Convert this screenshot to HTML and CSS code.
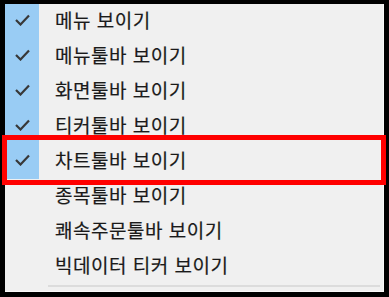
FILE: index.html
```html
<!DOCTYPE html>
<html lang="ko">
<head>
  <meta charset="UTF-8" />
  <meta name="viewport" content="width=device-width, initial-scale=1.0"/>
  <title>보기 메뉴</title>
  <link rel="stylesheet" href="styles.css">
</head>
<body>

  <div class="menu">
    <ul class="items">
      <li class="item checked">
        <span class="mark"><svg width="15" height="12" viewBox="0 0 15 12"><path d="M1 6 L5.5 10.5 L14 1.5" fill="none" stroke="#383838" stroke-width="2.2"/></svg></span>
        <span class="label">메뉴 보이기</span>
      </li>
      <li class="item checked">
        <span class="mark"><svg width="15" height="12" viewBox="0 0 15 12"><path d="M1 6 L5.5 10.5 L14 1.5" fill="none" stroke="#383838" stroke-width="2.2"/></svg></span>
        <span class="label">메뉴툴바 보이기</span>
      </li>
      <li class="item checked">
        <span class="mark"><svg width="15" height="12" viewBox="0 0 15 12"><path d="M1 6 L5.5 10.5 L14 1.5" fill="none" stroke="#383838" stroke-width="2.2"/></svg></span>
        <span class="label">화면툴바 보이기</span>
      </li>
      <li class="item checked">
        <span class="mark"><svg width="15" height="12" viewBox="0 0 15 12"><path d="M1 6 L5.5 10.5 L14 1.5" fill="none" stroke="#383838" stroke-width="2.2"/></svg></span>
        <span class="label">티커툴바 보이기</span>
      </li>
      <li class="item checked">
        <span class="mark"><svg width="15" height="12" viewBox="0 0 15 12"><path d="M1 6 L5.5 10.5 L14 1.5" fill="none" stroke="#383838" stroke-width="2.2"/></svg></span>
        <span class="label">차트툴바 보이기</span>
      </li>
      <li class="item">
        <span class="mark"></span>
        <span class="label">종목툴바 보이기</span>
      </li>
      <li class="item">
        <span class="mark"></span>
        <span class="label">쾌속주문툴바 보이기</span>
      </li>
      <li class="item">
        <span class="mark"></span>
        <span class="label">빅데이터 티커 보이기</span>
      </li>
    </ul>
    <div class="separator"></div>
  </div>

  <div class="highlight"></div>

</body>
</html>
```

FILE: styles.css
```css
body {
  margin: 0;
  background: #000;
  font-family: "Noto Sans CJK KR", "Noto Sans", sans-serif;
}

.menu {
  width: 379px;
  height: 288px;
  margin: 4px 5px 5px 5px;
  background: #f0f0f0;
  box-shadow: inset -1px -1px 0 #fafafa;
}

.items {
  list-style: none;
  margin: 0;
  padding: 0;
}

.item {
  display: flex;
  align-items: center;
  height: 35px;
}

.mark {
  width: 34px;
  height: 35px;
  display: flex;
  align-items: center;
  justify-content: center;
  padding-bottom: 3px;
  box-sizing: border-box;
}

.checked .mark {
  background: #99ccf4;
}

.label {
  margin-left: 16px;
  padding-bottom: 4px;
  font-size: 19px;
  color: #1a1a1a;
  letter-spacing: 0.5px;
  -webkit-text-stroke: 0.2px #1a1a1a;
}

.separator {
  height: 2px;
  margin: 1px 4px 0 43px;
  background: #dcdcdc;
}

.highlight {
  position: absolute;
  left: 2px;
  top: 135px;
  width: 384px;
  height: 50px;
  box-sizing: border-box;
  border: 5px solid #ff0000;
}
```
